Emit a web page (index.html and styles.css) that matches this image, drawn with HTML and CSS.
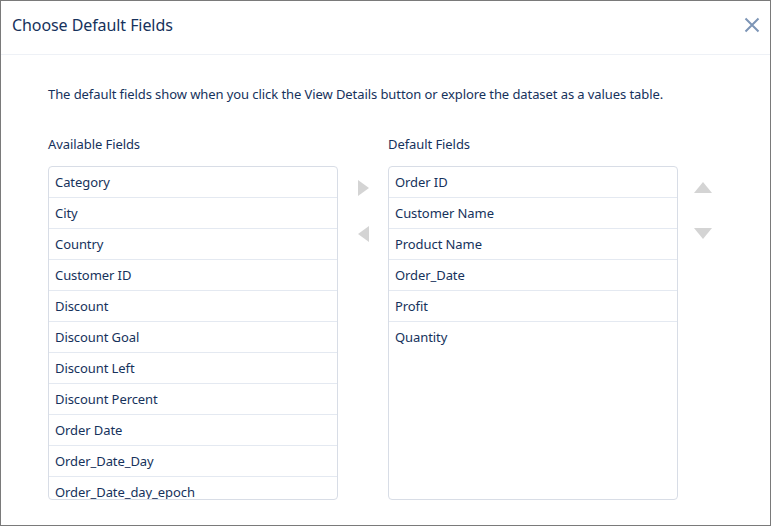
FILE: index.html
```html
<!DOCTYPE html>
<html lang="en">
<head>
  <meta charset="UTF-8">
  <title>Choose Default Fields</title>
  <link rel="stylesheet" href="styles.css">
</head>
<body>

  <div class="modal">
    <div class="modal-header">
      <h2>Choose Default Fields</h2>
      <button class="close" title="Close">
        <svg width="16" height="16" viewBox="0 0 16 16"><path d="M1.5 1.5 L14.5 14.5 M14.5 1.5 L1.5 14.5" stroke="currentColor" stroke-width="2" fill="none"/></svg>
      </button>
    </div>

    <div class="modal-body">
      <p class="intro">The default fields show when you click the View Details button or explore the dataset as a values table.</p>

      <div class="picker">
        <div class="column">
          <div class="label">Available Fields</div>
          <ul class="list">
            <li>Category</li>
            <li>City</li>
            <li>Country</li>
            <li>Customer ID</li>
            <li>Discount</li>
            <li>Discount Goal</li>
            <li>Discount Left</li>
            <li>Discount Percent</li>
            <li>Order Date</li>
            <li>Order_Date_Day</li>
            <li>Order_Date_day_epoch</li>
          </ul>
        </div>

        <div class="moves">
          <button class="arrow right" title="Add"></button>
          <button class="arrow left" title="Remove"></button>
        </div>

        <div class="column">
          <div class="label">Default Fields</div>
          <ul class="list">
            <li>Order ID</li>
            <li>Customer Name</li>
            <li>Product Name</li>
            <li>Order_Date</li>
            <li>Profit</li>
            <li>Quantity</li>
          </ul>
        </div>

        <div class="moves order">
          <button class="arrow up" title="Move up"></button>
          <button class="arrow down" title="Move down"></button>
        </div>
      </div>
    </div>
  </div>

</body>
</html>
```

FILE: styles.css
```css
* {
  box-sizing: border-box;
}
body {
  margin: 0;
  background: #fff;
  color: #16325c;
  font-family: "Noto Sans", sans-serif;
  font-size: 13px;
  letter-spacing: -0.08px;
}
.modal {
  width: 771px;
  height: 526px;
  border: 1px solid #7a7a7a;
  background: #fff;
  overflow: hidden;
}
.modal-header {
  height: 54px;
  display: flex;
  align-items: center;
  justify-content: space-between;
  padding: 0 10px 6px 11px;
  border-bottom: 1px solid #eef1f6;
}
.modal-header h2 {
  margin: 0;
  font-size: 16px;
  font-weight: normal;
}
.close {
  border: none;
  background: none;
  padding: 0;
  color: #7d95b6;
  cursor: pointer;
  display: flex;
}
.modal-body {
  padding: 30px 0 0 47px;
}
.intro {
  margin: 0 0 32px;
  line-height: 18px;
}
.picker {
  display: flex;
  align-items: flex-start;
}
.column {
  width: 290px;
}
.label {
  line-height: 18px;
  margin-bottom: 13px;
}
.list {
  list-style: none;
  margin: 0;
  padding: 0;
  height: 334px;
  border: 1px solid #d8dde6;
  border-radius: 4px;
  overflow: hidden;
}
.list li {
  height: 31px;
  line-height: 30px;
  padding-left: 6px;
  border-bottom: 1px solid #e4e9f1;
}
.list li:last-child {
  border-bottom: none;
}
.moves {
  width: 50px;
  display: flex;
  flex-direction: column;
  align-items: center;
  gap: 30px;
  padding-top: 45px;
}
.arrow {
  width: 0;
  height: 0;
  padding: 0;
  background: none;
  border: 0 solid transparent;
  cursor: pointer;
}
.arrow.right {
  border-width: 8px 0 8px 11px;
  border-left-color: #d4d4d4;
  margin-left: 1px;
}
.arrow.left {
  border-width: 8px 11px 8px 0;
  border-right-color: #d4d4d4;
}
.moves.order {
  padding-top: 47px;
  gap: 35px;
}
.arrow.up {
  border-width: 0 9px 11px 9px;
  border-bottom-color: #d4d4d4;
}
.arrow.down {
  border-width: 11px 9px 0 9px;
  border-top-color: #d4d4d4;
}
```
